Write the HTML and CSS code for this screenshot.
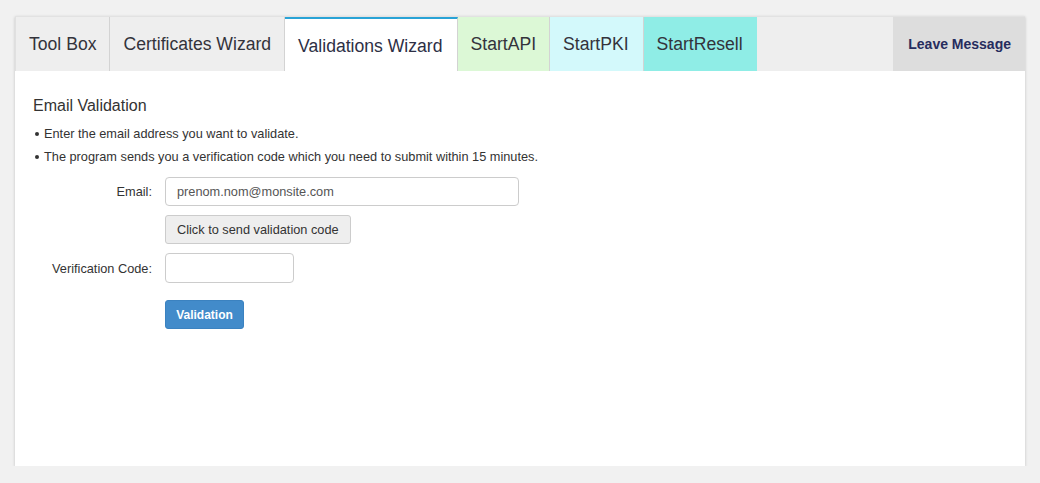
FILE: index.html
```html
<!DOCTYPE html>
<html>
<head>
<meta charset="utf-8">
<link rel="stylesheet" href="styles.css">
</head>
<body>
<div class="card">
  <div class="tabs">
    <div class="tab">Tool Box</div>
    <div class="tab">Certificates Wizard</div>
    <div class="tab active">Validations Wizard</div>
    <div class="tab api">StartAPI</div>
    <div class="tab pki">StartPKI</div>
    <div class="tab resell">StartResell</div>
    <div class="spacer"></div>
    <div class="leave">Leave Message</div>
  </div>
  <div class="content">
    <h2 class="title">Email Validation</h2>
    <ul class="notes">
      <li>Enter the email address you want to validate.</li>
      <li>The program sends you a verification code which you need to submit within 15 minutes.</li>
    </ul>
    <div class="form">
      <div class="row">
        <label class="label">Email:</label>
        <input class="input email" type="text" value="prenom.nom@monsite.com">
      </div>
      <div class="row">
        <span class="label"></span>
        <button class="btn">Click to send validation code</button>
      </div>
      <div class="row">
        <label class="label">Verification Code:</label>
        <input class="input code" type="text">
      </div>
      <div class="row submit">
        <span class="label"></span>
        <button class="btn primary">Validation</button>
      </div>
    </div>
  </div>
</div>
</body>
</html>
```

FILE: styles.css
```css
html, body {
  margin: 0;
  padding: 0;
  background: #f1f1f1;
  font-family: "Liberation Sans", Arial, sans-serif;
  color: #333;
}

body {
  padding: 16px 15px 0 15px;
}

.card {
  background: #fff;
  width: 1010px;
  height: 450px;
  box-shadow: 0 1px 3px rgba(0, 0, 0, 0.2);
  border-top: 1px solid #e2e2e2;
  box-sizing: border-box;
}

.tabs {
  display: flex;
  height: 54px;
  background: #eeeeee;
  border-left: 1px solid #e0e0e0;
}

.tab {
  display: flex;
  align-items: center;
  padding: 0 13px 0 13px;
  font-size: 17.6px;
  color: #33333b;
  border-right: 1px solid #d3d3d3;
  white-space: nowrap;
}

.tab.active {
  background: #fff;
  border-top: 2px solid #29a3d6;
  padding-top: 2px;
  color: #2d2f45;
  padding-right: 14px;
}

.tab.api { background: #dcf8d6; }
.tab.pki { background: #d3f9fb; padding-right: 14px; }
.tab.resell { background: #8fede6; border-right: none; padding-right: 14px; }

.spacer { flex: 1; }

.leave {
  display: flex;
  align-items: center;
  padding: 0 14px 0 15px;
  background: #dddddd;
  font-size: 14px;
  font-weight: bold;
  color: #262c5e;
}

.content {
  padding: 25px 18px 0 18px;
}

.title {
  margin: 0;
  font-size: 16px;
  font-weight: normal;
  line-height: 20px;
  color: #333;
}

.notes {
  margin: 6px 0 0 0;
  padding: 0 0 0 11px;
  font-size: 12.75px;
  line-height: 23px;
  list-style: none;
}

.notes li {
  position: relative;
}

.notes li::before {
  content: "";
  position: absolute;
  left: -9px;
  top: 10px;
  width: 4px;
  height: 4px;
  border-radius: 50%;
  background: #333;
}

.form {
  margin-top: 9px;
  display: flex;
  flex-direction: column;
  gap: 9px;
}

.row {
  display: flex;
  align-items: center;
}

.row.submit {
  margin-top: 8px;
}

.label {
  width: 119px;
  text-align: right;
  font-size: 12.75px;
  margin-right: 13px;
  color: #333;
}

.input {
  height: 29px;
  box-sizing: border-box;
  border: 1px solid #cccccc;
  border-radius: 4px;
  padding: 0 11px;
  font-family: "Liberation Sans", Arial, sans-serif;
  font-size: 12.75px;
  color: #555;
  outline: none;
  margin: 0;
}

.input.email { width: 354px; }
.input.code { width: 129px; height: 30px; }

.btn {
  height: 29px;
  box-sizing: border-box;
  border: 1px solid #cccccc;
  border-radius: 3px;
  background: #eeeeee;
  padding: 0 11px;
  font-family: "Liberation Sans", Arial, sans-serif;
  font-size: 12.75px;
  color: #333;
  margin: 0;
}

.btn.primary {
  background: #428bca;
  border-color: #3b82c0;
  color: #fff;
  font-weight: bold;
  font-size: 12px;
  width: 79px;
  padding: 0;
}
```
